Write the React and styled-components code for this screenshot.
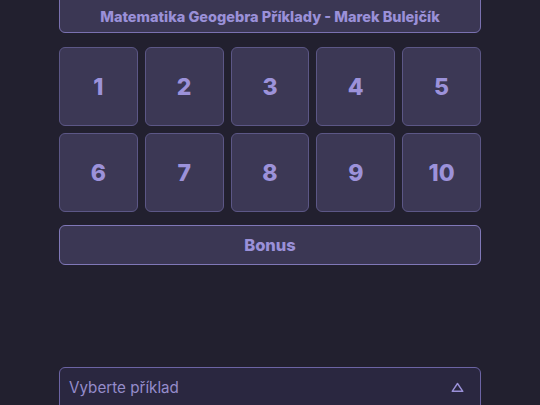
import React from "react";
import styled, { createGlobalStyle } from "styled-components";

const Global = createGlobalStyle`
  html, body {
    margin: 0;
    padding: 0;
    background: #22202f;
    font-family: "Inter", "Noto Sans", sans-serif;
    overflow: hidden;
  }
`;

const Page = styled.div`
  width: 422px;
  margin: 0 auto;
  display: flex;
  flex-direction: column;
  height: 405px;
`;

const Header = styled.div`
  margin-top: -20px;
  height: 53px;
  box-sizing: border-box;
  padding-top: 19px;
  display: flex;
  align-items: center;
  justify-content: center;
  background: #3b3754;
  border: 1px solid #7a71b0;
  border-radius: 6px;
  color: #9a90d8;
  font-weight: 800;
  font-size: 14.5px;
`;

const Grid = styled.div`
  margin-top: 14px;
  display: grid;
  grid-template-columns: repeat(5, 1fr);
  gap: 7px;
`;

const Tile = styled.button`
  height: 79px;
  background: #3c3855;
  border: 1px solid #5c5786;
  border-radius: 6px;
  color: #9c92da;
  font-family: inherit;
  font-weight: 800;
  font-size: 23px;
  padding: 0;
  display: flex;
  align-items: center;
  justify-content: center;
`;

const Bonus = styled.button`
  margin-top: 13px;
  height: 40px;
  background: #3b3754;
  border: 1px solid #8078b8;
  border-radius: 6px;
  color: #9a90d8;
  font-family: inherit;
  font-weight: 800;
  font-size: 16.5px;
`;

const Select = styled.div`
  margin-top: auto;
  margin-bottom: -10px;
  height: 48px;
  box-sizing: border-box;
  padding: 0 16px 8px 9px;
  display: flex;
  align-items: center;
  justify-content: space-between;
  background: #2a2740;
  border: 1px solid #6c64a4;
  border-radius: 6px;
  color: #958ccb;
  font-size: 15.2px;
`;

export default function App() {
  const nums = [1, 2, 3, 4, 5, 6, 7, 8, 9, 10];
  return (
    <>
      <Global />
      <Page>
        <Header>Matematika Geogebra Příklady - Marek Bulejčík</Header>
        <Grid>
          {nums.map((n) => (
            <Tile key={n}>{n}</Tile>
          ))}
        </Grid>
        <Bonus>Bonus</Bonus>
        <Select>
          <span>Vyberte příklad</span>
          <svg width="13" height="11" viewBox="0 0 13 11" fill="none">
            <path
              d="M6.5 1.5 L11.8 9.3 H1.2 Z"
              stroke="#9a90d8"
              strokeWidth="1.4"
              strokeLinejoin="round"
            />
          </svg>
        </Select>
      </Page>
    </>
  );
}
